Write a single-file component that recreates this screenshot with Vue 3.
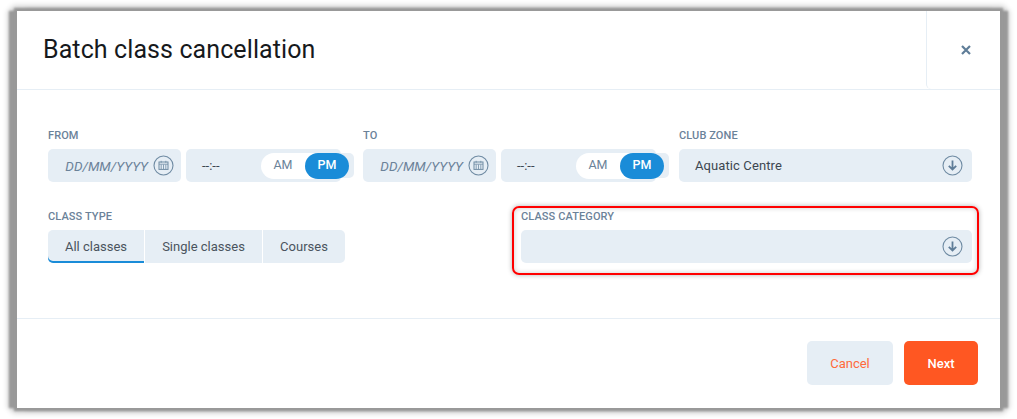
<script setup>
const dateGroups = [
  { label: 'FROM' },
  { label: 'TO' },
];
const tabs = ['All classes', 'Single classes', 'Courses'];
</script>

<template>
  <div class="page">
    <div class="modal">
      <header class="modal-head">
        <h1 class="title">Batch class cancellation</h1>
        <button class="close" type="button">
          <svg width="10" height="10" viewBox="0 0 10 10">
            <path d="M1 1l8 8M9 1l-8 8" stroke="#5f7d98" stroke-width="2.2" fill="none" />
          </svg>
        </button>
      </header>

      <div class="modal-body">
        <div class="row-one">
          <div v-for="group in dateGroups" :key="group.label" class="field">
            <label class="label">{{ group.label }}</label>
            <div class="date-time">
              <div class="date">
                <span class="date-text">DD/MM/YYYY</span>
                <svg class="round-icon" width="21" height="21" viewBox="0 0 21 21">
                  <circle cx="10.5" cy="10.5" r="9.5" fill="none" stroke="#6f8ba3" stroke-width="1.1" />
                  <rect x="6" y="7" width="9" height="7.4" fill="none" stroke="#6f8ba3" stroke-width="1" />
                  <path d="M6 9.2h9M8.2 5.8v2M12.8 5.8v2M8.2 9.5v4.5M10.5 9.5v4.5M12.8 9.5v4.5" stroke="#6f8ba3" stroke-width="0.8" fill="none" />
                </svg>
              </div>
              <div class="time">
                <div class="time-box"><span class="time-text">--:--</span></div>
                <div class="ampm">
                  <span class="am">AM</span>
                  <span class="pm">PM</span>
                </div>
              </div>
            </div>
          </div>

          <div class="field">
            <label class="label">CLUB ZONE</label>
            <div class="select">
              <span class="select-text">Aquatic Centre</span>
              <svg class="round-icon" width="21" height="21" viewBox="0 0 21 21">
                <circle cx="10.5" cy="10.5" r="9.5" fill="none" stroke="#6f8ba3" stroke-width="1.1" />
                <path d="M10.5 5.5v9M6.8 10.8l3.7 3.7 3.7-3.7" stroke="#5f7d98" stroke-width="1.8" fill="none" />
              </svg>
            </div>
          </div>
        </div>

        <div class="row-two">
          <div class="field">
            <label class="label">CLASS TYPE</label>
            <div class="tabs">
              <button
                v-for="(tab, i) in tabs"
                :key="tab"
                type="button"
                class="tab"
                :class="{ active: i === 0 }"
              >{{ tab }}</button>
            </div>
          </div>

          <div class="field">
            <label class="label">CLASS CATEGORY</label>
            <div class="select">
              <span class="select-text"></span>
              <svg class="round-icon" width="21" height="21" viewBox="0 0 21 21">
                <circle cx="10.5" cy="10.5" r="9.5" fill="none" stroke="#6f8ba3" stroke-width="1.1" />
                <path d="M10.5 5.5v9M6.8 10.8l3.7 3.7 3.7-3.7" stroke="#5f7d98" stroke-width="1.8" fill="none" />
              </svg>
            </div>
          </div>
        </div>
      </div>

      <footer class="modal-foot">
        <button class="btn cancel" type="button">Cancel</button>
        <button class="btn next" type="button">Next</button>
      </footer>

      <!-- red annotation over the category field -->
      <div class="highlight"></div>
    </div>
  </div>
</template>

<style>
html, body {
  margin: 0;
  background: #fff;
}
</style>

<style scoped>
.page {
  width: 1017px;
  height: 419px;
  box-sizing: border-box;
  padding: 11px 17px;
  font-family: Roboto, "Liberation Sans", sans-serif;
  overflow: hidden;
}

.modal {
  position: relative;
  width: 983px;
  height: 397px;
  background: #fff;
  display: flex;
  flex-direction: column;
  box-shadow: 0 0 2px 3px #999, -8px 0 2px 0 #999, 8px 0 2px 0 #999, 0 0 6px 5px rgba(0, 0, 0, 0.2), -9px 0 5px 1px rgba(0, 0, 0, 0.15), 9px 0 5px 1px rgba(0, 0, 0, 0.15);
}

.modal-head {
  height: 79px;
  box-sizing: border-box;
  flex: none;
  display: flex;
  justify-content: space-between;
  border-bottom: 1px solid #e6eef5;
}

.title {
  margin: 0 0 0 26px;
  font-size: 25px;
  line-height: 78px;
  font-weight: 400;
  letter-spacing: 0.1px;
  color: #16191c;
}

.close {
  width: 74px;
  padding: 0 0 0 5px;
  background: none;
  border: none;
  border-left: 1px solid #e6eef5;
  border-bottom-left-radius: 5px;
  display: flex;
  align-items: center;
  justify-content: center;
}

.modal-body {
  flex: 1;
  padding: 39px 28px 0 31px;
}

.row-one {
  display: grid;
  grid-template-columns: 315px 316px 293px;
}

.row-two {
  margin-top: 28px;
  display: grid;
  grid-template-columns: 464px 451px;
  column-gap: 9px;
}

.label {
  display: block;
  height: 14px;
  margin-bottom: 6px;
  font-size: 11px;
  line-height: 14px;
  font-weight: 500;
  letter-spacing: 0.1px;
  color: #6b8299;
}

.date-time {
  width: 306px;
  display: flex;
  gap: 5px;
}

.date {
  width: 133px;
  height: 33px;
  box-sizing: border-box;
  padding-right: 7px;
  background: #e6eef5;
  border-radius: 5px;
  display: flex;
  align-items: center;
  justify-content: flex-end;
  gap: 5px;
}

.date-text {
  font-size: 13.5px;
  font-style: italic;
  color: #6b8299;
}

.round-icon {
  flex: none;
}

.time {
  position: relative;
  flex: 1;
  height: 33px;
}

.time-box {
  width: 155px;
  height: 33px;
  box-sizing: border-box;
  padding-left: 16px;
  background: #e6eef5;
  border-radius: 5px;
  display: flex;
  align-items: center;
}

.time-text {
  font-size: 13px;
  color: #3c4650;
}

.ampm {
  position: absolute;
  top: 4px;
  right: 0;
  width: 93px;
  height: 25px;
  background: #e6eef5;
  border-radius: 0 5px 5px 0;
}

.am,
.pm {
  position: absolute;
  top: 0;
  height: 26px;
  font-size: 12.5px;
  line-height: 24px;
  text-align: center;
  border-radius: 13px;
}

.am {
  left: 0;
  width: 88px;
  box-sizing: border-box;
  padding-right: 44px;
  background: #fff;
  color: #6b8299;
}

.pm {
  left: 44px;
  width: 44px;
  background: #1a8cd8;
  color: #fff;
  font-weight: 500;
}

.select {
  height: 33px;
  box-sizing: border-box;
  padding: 0 9px 0 16px;
  background: #e6eef5;
  border-radius: 5px;
  display: flex;
  align-items: center;
  justify-content: space-between;
}

.select-text {
  font-size: 13px;
  letter-spacing: 0.1px;
  color: #3c4650;
}

.tabs {
  display: flex;
  gap: 1px;
}

.tab {
  height: 33px;
  padding: 0;
  background: #e6eef5;
  border: none;
  font-family: inherit;
  font-size: 13px;
  color: #4a545e;
}

.tab:nth-child(1) {
  width: 96px;
  border-radius: 5px 0 0 5px;
}

.tab:nth-child(2) {
  width: 117px;
}

.tab:nth-child(3) {
  width: 82px;
  border-radius: 0 5px 5px 0;
}

.tab.active {
  box-shadow: inset 0 -2px 0 #1a8cd8;
}

.modal-foot {
  height: 90px;
  flex: none;
  box-sizing: border-box;
  border-top: 1px solid #e6eef5;
  padding: 22px 22px 0 0;
  display: flex;
  justify-content: flex-end;
  gap: 11px;
}

.btn {
  height: 44px;
  padding: 0;
  border: none;
  border-radius: 5px;
  font-family: inherit;
  font-size: 13px;
}

.cancel {
  width: 86px;
  background: #e6eef5;
  color: #ff6a3c;
}

.next {
  width: 74px;
  background: #ff5722;
  color: #fff;
  font-weight: 500;
}

.highlight {
  position: absolute;
  left: 495px;
  top: 195px;
  width: 463px;
  height: 65px;
  border: 2px solid #f00;
  border-radius: 7px;
  box-shadow: 0 0 5px rgba(0, 0, 0, 0.3), inset 0 0 5px rgba(0, 0, 0, 0.2);
  pointer-events: none;
}
</style>
